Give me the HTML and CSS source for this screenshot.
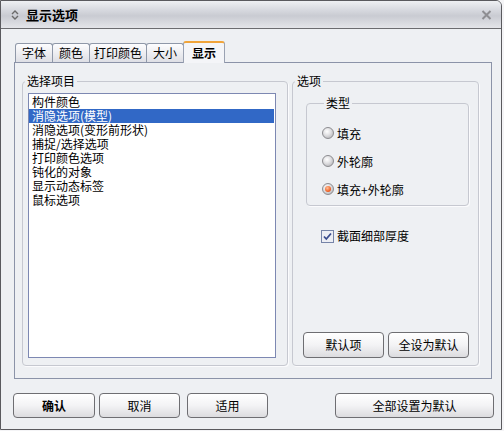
FILE: index.html
```html
<!DOCTYPE html>
<html lang="zh-CN">
<head>
    <meta charset="UTF-8">
    <title>显示选项</title>
    <link rel="stylesheet" href="styles.css">
</head>
<body>
    <div class="window">
        <div class="titlebar">
            <svg class="title-icon" width="8" height="10" viewBox="0 0 8 10">
                <path d="M1 4 L4 1 L7 4 M1 6 L4 9 L7 6" fill="none" stroke="#6a6a6a" stroke-width="1.4"/>
            </svg>
            <span class="title">显示选项</span>
            <svg class="close" width="11" height="10" viewBox="0 0 11 10">
                <path d="M1.5 1 L9.5 9 M9.5 1 L1.5 9" stroke="#8e8e92" stroke-width="2" fill="none"/>
            </svg>
        </div>
        <div class="content">
            <div class="tabs">
                <div class="tab">字体</div>
                <div class="tab">颜色</div>
                <div class="tab long">打印颜色</div>
                <div class="tab">大小</div>
                <div class="tab active">显示</div>
            </div>
            <div class="panel">
                <fieldset class="group items">
                    <legend>选择项目</legend>
                    <div class="listbox">
                        <div class="item">构件颜色</div>
                        <div class="item selected">消隐选项(模型)</div>
                        <div class="item">消隐选项(变形前形状)</div>
                        <div class="item">捕捉/选择选项</div>
                        <div class="item">打印颜色选项</div>
                        <div class="item">钝化的对象</div>
                        <div class="item">显示动态标签</div>
                        <div class="item">鼠标选项</div>
                    </div>
                </fieldset>
                <fieldset class="group options">
                    <legend>选项</legend>
                    <fieldset class="group kind">
                        <legend>类型</legend>
                        <div class="radio"><span class="dot"></span>填充</div>
                        <div class="radio"><span class="dot"></span>外轮廓</div>
                        <div class="radio"><span class="dot on"></span>填充+外轮廓</div>
                    </fieldset>
                    <div class="check">
                        <svg class="box" width="13" height="13" viewBox="0 0 13 13">
                            <rect x="0.5" y="0.5" width="12" height="12" fill="#eceef4" stroke="#7684a8"/>
                            <path d="M3 6.5 L5.3 9 L10 3.5" fill="none" stroke="#3a4c8e" stroke-width="1.8"/>
                        </svg>
                        截面细部厚度
                    </div>
                    <div class="option-buttons">
                        <button class="btn small">默认项</button>
                        <button class="btn small wide">全设为默认</button>
                    </div>
                </fieldset>
            </div>
            <div class="footer">
                <button class="btn ok">确认</button>
                <button class="btn cancel">取消</button>
                <button class="btn apply">适用</button>
                <button class="btn reset">全部设置为默认</button>
            </div>
        </div>
    </div>
</body>
</html>
```

FILE: styles.css
```css
body {
    margin: 0;
    width: 504px;
    height: 431px;
    background: #f4f4f6;
    font-family: "Noto Sans CJK SC", sans-serif;
    font-size: 12px;
    color: #000;
}
.window {
    box-sizing: border-box;
    width: 502px;
    height: 430px;
    border: 1px solid #5a5a5e;
    border-top-right-radius: 6px;
    background: #eef0f3;
    display: flex;
    flex-direction: column;
    overflow: hidden;
}
.titlebar {
    height: 27px;
    border-bottom: 1px solid #6c6c70;
    background: linear-gradient(to bottom, #eef0f3 0%, #d6d8de 35%, #c9cbd2 55%, #e4e5e9 100%);
    display: flex;
    align-items: center;
    padding: 0 9px 0 10px;
}
.title-icon {
    margin-right: 7px;
}
.title {
    font-weight: bold;
    font-size: 13px;
    line-height: 16px;
}
.close {
    margin-left: auto;
}
.content {
    padding: 12px 9px 0 13px;
}
.tabs {
    display: flex;
    align-items: flex-end;
    height: 21px;
    padding-left: 1px;
}
.tab {
    height: 18px;
    line-height: 18px;
    padding: 0 6px;
    border: 1px solid #8f98a8;
    border-bottom: none;
    border-radius: 3px 3px 0 0;
    background: linear-gradient(to bottom, #fdfdfe, #dedfe5);
    margin-right: -1px;
}
.tab.long {
    padding: 0 4px;
}
.tab.active {
    position: relative;
    z-index: 1;
    height: 20px;
    line-height: 20px;
    margin-bottom: -1px;
    padding: 0 8px;
    font-weight: bold;
    background: #f4f5f8;
    border-top: 2px solid #f0a43a;
    border-left-color: #9aa2b2;
    border-right-color: #9aa2b2;
}
.panel {
    box-sizing: border-box;
    height: 317px;
    border: 1px solid #8b93a8;
    background: #eef0f3;
    padding: 11px 12px 12px 7px;
    display: flex;
    gap: 4px;
}
.group {
    margin: 0;
    padding: 0;
    border: 1px solid #c6c8d0;
    border-radius: 4px;
    box-shadow: 1px 1px 0 #fbfbfd;
}
.group legend {
    padding: 0 2px;
    margin-left: 2px;
    line-height: 14px;
}
.items {
    box-sizing: border-box;
    width: 266px;
}
.listbox {
    box-sizing: border-box;
    width: 248px;
    height: 265px;
    margin: 5px 0 0 5px;
    border: 1px solid #7d88b2;
    background: #fff;
    padding-top: 1px;
}
.item {
    height: 14px;
    line-height: 14px;
    padding-left: 3px;
    white-space: nowrap;
}
.item.selected {
    background: #3168c6;
    color: #fff;
    margin-right: 1px;
}
.options {
    flex: 1;
    display: flex;
    flex-direction: column;
}
.kind {
    box-sizing: border-box;
    height: 110px;
    margin: 8px 9px 0 13px;
    padding: 9px 0 0 15px;
}
.radio {
    height: 28px;
    display: flex;
    align-items: center;
    gap: 3px;
}
.dot {
    box-sizing: border-box;
    width: 12px;
    height: 12px;
    border-radius: 50%;
    border: 1px solid #8c8c90;
    background: radial-gradient(circle at 40% 35%, #ffffff 0%, #e2e2e4 40%, #a9a9ad 100%);
    display: flex;
    align-items: center;
    justify-content: center;
}
.dot.on::after {
    content: "";
    width: 6px;
    height: 6px;
    border-radius: 50%;
    background: radial-gradient(circle at 40% 35%, #ffc09a 0%, #f0662a 60%, #c8400e 100%);
}
.check {
    margin: 23px 0 0 28px;
    height: 14px;
    line-height: 14px;
    display: flex;
    align-items: center;
    gap: 3px;
}
.option-buttons {
    margin: auto 0 7px 10px;
    display: flex;
    gap: 4px;
}
.btn {
    box-sizing: border-box;
    height: 25px;
    border: 1px solid #6e6e72;
    border-radius: 4px;
    background: linear-gradient(to bottom, #ffffff 0%, #f3f3f5 50%, #dcdcdf 100%);
    font-family: inherit;
    font-size: 12px;
    color: #000;
    padding: 0;
    line-height: 14px;
}
.btn.small {
    width: 81px;
    height: 26px;
}
.footer {
    display: flex;
    margin: 14px -2px 0 -1px;
}
.ok {
    width: 82px;
    font-weight: bold;
}
.cancel {
    width: 81px;
    margin-left: 4px;
}
.apply {
    width: 81px;
    margin-left: 7px;
}
.reset {
    width: 159px;
    margin-left: auto;
}
```
